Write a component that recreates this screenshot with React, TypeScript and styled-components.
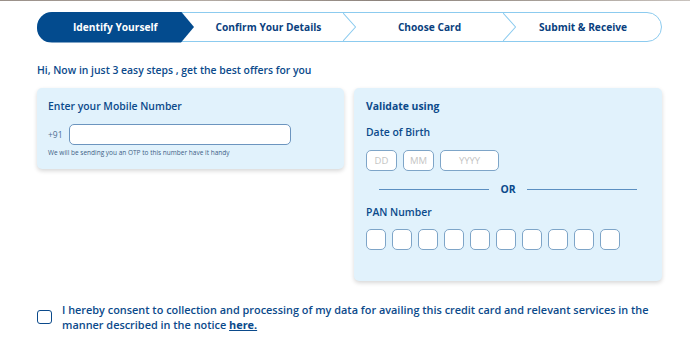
import React from "react";
import styled, { createGlobalStyle } from "styled-components";

const Global = createGlobalStyle`
  html, body { margin: 0; padding: 0; background: #ffffff; }
  body { font-family: "Open Sans", "Noto Sans", Arial, sans-serif; color: #0b4a8b; }
  * { box-sizing: border-box; }
`;

const TopRule = styled.div`
  height: 1px;
  background: linear-gradient(90deg, #9a9089 0%, #b3aaa3 30%, #8d837c 55%, #a9a19a 80%, #c9c3be 100%);
`;

const Page = styled.div`
  padding: 11px 28px 0 37px;
`;

const Stepper = styled.div`
  width: 625px;
  height: 30px;
  display: flex;
  border: 1.5px solid #8ccbef;
  border-radius: 15px;
`;

const Step = styled.div<{ $active?: boolean; $first?: boolean; $w: number }>`
  position: relative;
  flex: 0 0 ${(p) => p.$w}px;
  margin-left: ${(p) => (p.$first ? "-1.5px" : "-13px")};
  margin-top: ${(p) => (p.$active ? "-1.5px" : "0")};
  margin-bottom: ${(p) => (p.$active ? "-1.5px" : "0")};
  display: flex;
  align-items: center;
  justify-content: center;
  font-size: 10.2px;
  font-weight: 700;
  color: ${(p) => (p.$active ? "#ffffff" : "#0a3f7e")};
  background: ${(p) => (p.$active ? "#034b8e" : "transparent")};
  border-radius: ${(p) => (p.$first ? "15px 0 0 15px" : "0")};
  clip-path: ${(p) =>
    p.$active
      ? "polygon(0 0, calc(100% - 13px) 0, 100% 50%, calc(100% - 13px) 100%, 0 100%)"
      : "none"};
  z-index: ${(p) => (p.$active ? 2 : 1)};
`;

const Chevron = styled.svg`
  position: absolute;
  right: 0;
  top: 0;
  width: 13px;
  height: 100%;
`;

const Greeting = styled.div`
  margin-top: 21px;
  font-size: 10.4px;
  line-height: 15px;
  font-weight: 600;
  color: #0b4a8b;
`;

const Cards = styled.div`
  margin-top: 10px;
  display: flex;
  align-items: flex-start;
  gap: 10px;
`;

const Card = styled.div<{ $w: number }>`
  width: ${(p) => p.$w}px;
  background: #e1f2fc;
  border-radius: 5px;
  box-shadow: 0 2px 4px rgba(0, 0, 0, 0.16);
`;

const MobileCard = styled(Card)`
  padding: 11px 11px 11px 11px;
`;

const ValidateCard = styled(Card)`
  padding: 11px 12px 31px 12px;
`;

const CardTitle = styled.div<{ $bold?: boolean }>`
  font-size: 10.4px;
  line-height: 14px;
  font-weight: ${(p) => (p.$bold ? 700 : 600)};
  color: #0b4a8b;
`;

const FieldLabel = styled.div<{ $mt: number }>`
  margin-top: ${(p) => p.$mt}px;
  font-size: 10.4px;
  line-height: 14px;
  font-weight: 600;
  color: #0b4a8b;
`;

const PhoneRow = styled.div`
  margin-top: 11px;
  display: flex;
  align-items: center;
`;

const Prefix = styled.span`
  width: 21px;
  font-size: 8.5px;
  color: #4d6f93;
`;

const PhoneInput = styled.div`
  width: 222px;
  height: 21px;
  background: #ffffff;
  border: 1px solid #6c95bf;
  border-radius: 5px;
`;

const Help = styled.div`
  margin-top: 3px;
  font-size: 6.5px;
  line-height: 10px;
  color: #3d5f85;
`;

const BoxRow = styled.div<{ $mt: number; $gap: number }>`
  margin-top: ${(p) => p.$mt}px;
  display: flex;
  gap: ${(p) => p.$gap}px;
`;

const Box = styled.div<{ $w: number }>`
  width: ${(p) => p.$w}px;
  height: 21px;
  background: #ffffff;
  border: 1px solid #7ea5c8;
  border-radius: 5px;
  display: flex;
  align-items: center;
  justify-content: center;
  font-size: 9.5px;
  color: #c4c4c4;
`;

const OrRow = styled.div`
  margin-top: 11px;
  padding: 0 13px;
  height: 14px;
  display: flex;
  align-items: center;
  gap: 11px;
`;

const OrLine = styled.div`
  flex: 1;
  height: 1px;
  background: #5b8fc1;
`;

const OrText = styled.span`
  font-size: 10.4px;
  font-weight: 700;
  color: #0b4a8b;
`;

const Consent = styled.div`
  margin-top: 21px;
  display: flex;
  align-items: center;
  gap: 10px;
`;

const Check = styled.div`
  flex: 0 0 15px;
  height: 14px;
  border: 1.5px solid #0b4a8b;
  border-radius: 3px;
  background: #ffffff;
`;

const ConsentText = styled.div`
  font-size: 10.9px;
  line-height: 15px;
  font-weight: 600;
  color: #0b4a8b;
  width: 600px;
`;

const Link = styled.a`
  color: #0b4a8b;
  text-decoration: underline;
  font-weight: 700;
`;

const steps = [
  { label: "Identify Yourself", w: 157.5 },
  { label: "Confirm Your Details", w: 175 },
  { label: "Choose Card", w: 173 },
  { label: "Submit & Receive", w: 160 },
];

export default function App() {
  return (
    <>
      <Global />
      <TopRule />
      <Page>
        <Stepper>
          {steps.map((s, i) => (
            <Step key={s.label} $w={s.w} $active={i === 0} $first={i === 0}>
              {s.label}
              {i > 0 && i < steps.length - 1 && (
                <Chevron viewBox="0 0 13 27" preserveAspectRatio="none">
                  <polyline points="0,0 12.5,13.5 0,27" fill="none" stroke="#8ccbef" strokeWidth="1" />
                </Chevron>
              )}
            </Step>
          ))}
        </Stepper>

        <Greeting>Hi, Now in just 3 easy steps , get the best offers for you</Greeting>

        <Cards>
          <MobileCard $w={307}>
            <CardTitle>Enter your Mobile Number</CardTitle>
            <PhoneRow>
              <Prefix>+91</Prefix>
              <PhoneInput />
            </PhoneRow>
            <Help>We will be sending you an OTP to this number have it handy</Help>
          </MobileCard>

          <ValidateCard $w={308}>
            <CardTitle $bold>Validate using</CardTitle>
            <FieldLabel $mt={12}>Date of Birth</FieldLabel>
            <BoxRow $mt={11} $gap={6}>
              <Box $w={31}>DD</Box>
              <Box $w={31}>MM</Box>
              <Box $w={59}>YYYY</Box>
            </BoxRow>
            <OrRow>
              <OrLine />
              <OrText>OR</OrText>
              <OrLine />
            </OrRow>
            <FieldLabel $mt={9}>PAN Number</FieldLabel>
            <BoxRow $mt={10} $gap={6}>
              {Array.from({ length: 10 }).map((_, i) => (
                <Box key={i} $w={20} />
              ))}
            </BoxRow>
          </ValidateCard>
        </Cards>

        <Consent>
          <Check />
          <ConsentText>
            I hereby consent to collection and processing of my data for availing this credit card and relevant services in the
            manner described in the notice <Link href="#">here.</Link>
          </ConsentText>
        </Consent>
      </Page>
    </>
  );
}
